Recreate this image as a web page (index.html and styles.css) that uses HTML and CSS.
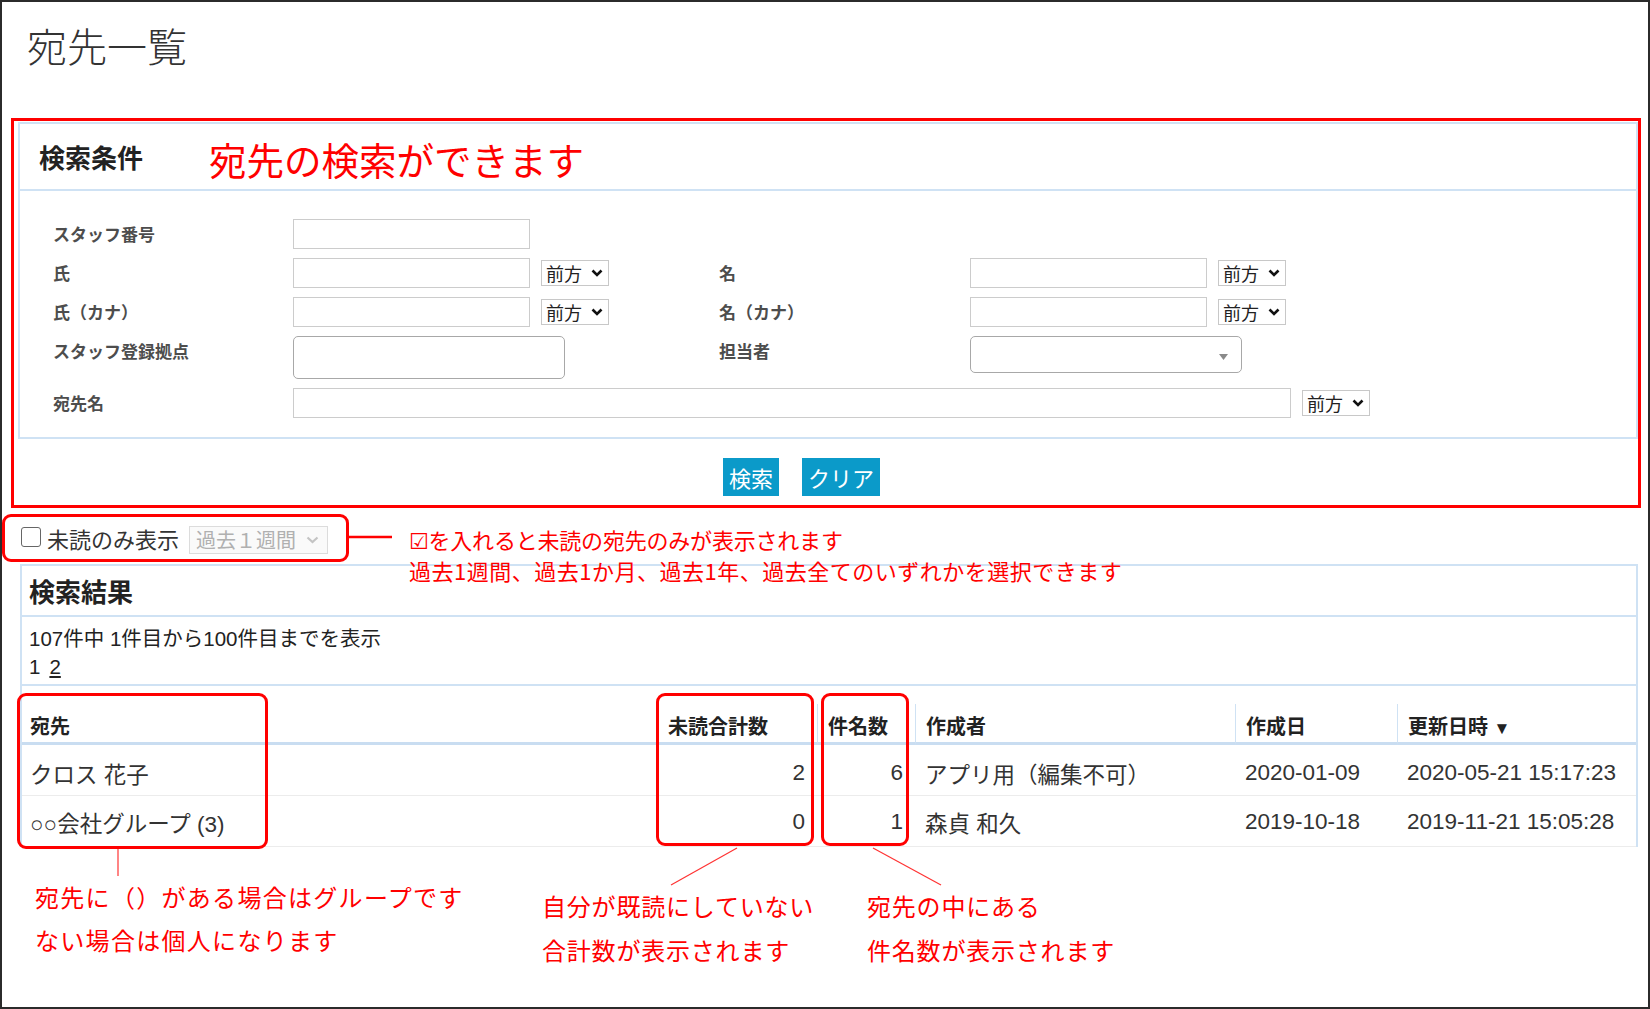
FILE: index.html
```html
<!DOCTYPE html>
<html lang="ja">
<head>
<meta charset="utf-8">
<title>宛先一覧</title>
<link rel="stylesheet" href="styles.css">
</head>
<body>
<div class="frame">
  <h1 class="page-title">宛先一覧</h1>

  <div class="search-callout">
    <section class="panel">
      <header class="panel-head">
        <h2 class="panel-title">検索条件</h2>
        <p class="note-lg">宛先の検索ができます</p>
      </header>
      <div class="panel-body">
        <div class="form-grid">
          <label class="f-label">スタッフ番号</label>
          <input class="f-input" type="text">
          <span class="blank-row"></span>

          <label class="f-label">氏</label>
          <input class="f-input" type="text">
          <div class="sel"><span>前方</span><svg width="12" height="8" viewBox="0 0 12 8"><path d="M1.5 1.5 L6 6 L10.5 1.5" fill="none" stroke="#111" stroke-width="2.6"/></svg></div>
          <label class="f-label">名</label>
          <input class="f-input" type="text">
          <div class="sel"><span>前方</span><svg width="12" height="8" viewBox="0 0 12 8"><path d="M1.5 1.5 L6 6 L10.5 1.5" fill="none" stroke="#111" stroke-width="2.6"/></svg></div>

          <label class="f-label">氏（カナ）</label>
          <input class="f-input" type="text">
          <div class="sel"><span>前方</span><svg width="12" height="8" viewBox="0 0 12 8"><path d="M1.5 1.5 L6 6 L10.5 1.5" fill="none" stroke="#111" stroke-width="2.6"/></svg></div>
          <label class="f-label">名（カナ）</label>
          <input class="f-input" type="text">
          <div class="sel"><span>前方</span><svg width="12" height="8" viewBox="0 0 12 8"><path d="M1.5 1.5 L6 6 L10.5 1.5" fill="none" stroke="#111" stroke-width="2.6"/></svg></div>

          <label class="f-label">スタッフ登録拠点</label>
          <input class="f-input round" type="text">
          <label class="f-label">担当者</label>
          <div class="combo"><svg width="9" height="6" viewBox="0 0 9 6"><polygon points="0,0 9,0 4.5,6" fill="#8a8a8a"/></svg></div>

          <label class="f-label">宛先名</label>
          <div class="wide">
            <input class="f-input long" type="text">
            <div class="sel"><span>前方</span><svg width="12" height="8" viewBox="0 0 12 8"><path d="M1.5 1.5 L6 6 L10.5 1.5" fill="none" stroke="#111" stroke-width="2.6"/></svg></div>
          </div>
        </div>
      </div>
    </section>
    <div class="actions">
      <button class="btn" type="button">検索</button>
      <button class="btn" type="button">クリア</button>
    </div>
  </div>

  <div class="filter-row">
    <div class="filter-box">
      <input class="check" type="checkbox">
      <span class="check-text">未読のみ表示</span>
      <div class="period-sel"><span>過去１週間</span><svg width="13" height="8" viewBox="0 0 13 8"><path d="M1.5 1.5 L6.5 6 L11.5 1.5" fill="none" stroke="#c4c4c4" stroke-width="2.2"/></svg></div>
    </div>
    <p class="filter-note"><span>☑を入れると未読の宛先のみが表示されます</span><br><span class="wide-line">過去1週間、過去1か月、過去1年、過去全てのいずれかを選択できます</span></p>
  </div>

  <section class="results">
    <header class="results-head">
      <h2 class="panel-title">検索結果</h2>
    </header>
    <div class="results-info">
      <div>107件中 1件目から100件目までを表示</div>
      <div class="pager"><span>1</span><a href="#">2</a></div>
    </div>
    <table class="list">
      <colgroup>
        <col class="c-dest">
        <col class="c-unread">
        <col class="c-count">
        <col class="c-author">
        <col class="c-created">
        <col class="c-updated">
      </colgroup>
      <thead>
        <tr class="head">
          <th>宛先</th>
          <th>未読合計数</th>
          <th>件名数</th>
          <th>作成者</th>
          <th>作成日</th>
          <th>更新日時 <span class="sort">▼</span></th>
        </tr>
      </thead>
      <tbody>
        <tr class="row">
          <td>クロス 花子</td>
          <td class="num">2</td>
          <td class="num">6</td>
          <td>アプリ用（編集不可）</td>
          <td>2020-01-09</td>
          <td>2020-05-21 15:17:23</td>
        </tr>
        <tr class="row">
          <td>○○会社グループ (3)</td>
          <td class="num">0</td>
          <td class="num">1</td>
          <td>森貞 和久</td>
          <td>2019-10-18</td>
          <td>2019-11-21 15:05:28</td>
        </tr>
      </tbody>
    </table>
  </section>

  <div class="notes">
    <p class="note note-group">宛先に（）がある場合はグループです<br>ない場合は個人になります</p>
    <p class="note note-unread">自分が既読にしていない<br>合計数が表示されます</p>
    <p class="note note-count">宛先の中にある<br>件名数が表示されます</p>
  </div>

  <!-- callout marks drawn over the list -->
  <div class="marks">
    <div class="mark-box mb-dest"></div>
    <div class="mark-box mb-unread"></div>
    <div class="mark-box mb-count"></div>
    <svg class="mark-lines" width="1646" height="1005" viewBox="0 0 1646 1005">
      <line x1="347" y1="535" x2="390" y2="535" stroke="#ff0000" stroke-width="2.5"/>
      <line x1="116" y1="847" x2="116" y2="874" stroke="#ff3333" stroke-width="1.2"/>
      <line x1="735" y1="846" x2="669" y2="883" stroke="#ff3333" stroke-width="1.2"/>
      <line x1="871" y1="846" x2="939" y2="883" stroke="#ff3333" stroke-width="1.2"/>
    </svg>
  </div>
</div>
</body>
</html>
```

FILE: styles.css
```css
* { box-sizing: border-box; }

html, body {
  margin: 0;
  padding: 0;
  background: #fff;
}

body {
  font-family: "Liberation Sans", "Noto Sans CJK JP", sans-serif;
  color: #333;
}

.frame {
  position: relative;
  width: 1650px;
  height: 1009px;
  border: 2px solid #2b2b2b;
  overflow: hidden;
}

.page-title {
  margin: 20px 0 50px 25px;
  font-family: "Noto Sans CJK JP", sans-serif;
  font-size: 40px;
  line-height: 46px;
  font-weight: 300;
  color: #333;
}

/* search conditions */
.search-callout {
  margin: 0 7px 0 9px;
  border: 3px solid #ff0000;
  padding: 1px 0 0 4px;
}

.panel {
  border: 2px solid #cfe2f4;
}

.panel-head {
  height: 67px;
  display: flex;
  align-items: center;
  padding-left: 19px;
  border-bottom: 2px solid #cfe2f4;
}

.panel-title {
  margin: 0;
  font-family: "Noto Sans CJK JP", sans-serif;
  font-size: 26px;
  font-weight: 700;
  color: #222;
  line-height: 1;
}

.note-lg {
  margin: 0 0 0 66px;
  padding-top: 5px;
  font-family: "Noto Sans CJK JP", sans-serif;
  font-size: 37.5px;
  line-height: 1;
  color: #ff0000;
}

.panel-body {
  padding: 28px 0 19px 33px;
}

.form-grid {
  display: grid;
  grid-template-columns: 240px 248px 178px 251px 248px 68px;
  row-gap: 9px;
  align-items: start;
}

.blank-row {
  grid-column: 3 / -1;
}

.f-label {
  font-family: "Noto Sans CJK JP", sans-serif;
  font-size: 17px;
  line-height: 30px;
  font-weight: 700;
  color: #4d4d4d;
}

.f-input {
  display: block;
  flex: none;
  width: 237px;
  height: 30px;
  margin: 0;
  padding: 0 4px;
  border: 1px solid #cccccc;
  background: #fff;
  font-size: 16px;
  outline: none;
}

.f-input.round {
  grid-column: 2 / 4;
  width: 272px;
  height: 43px;
  border-color: #a8a8a8;
  border-radius: 5px;
}

.f-input.long {
  width: 998px;
}

.combo {
  grid-column: 5 / 7;
  width: 272px;
  height: 37px;
  border: 1px solid #a8a8a8;
  border-radius: 5px;
  display: flex;
  align-items: center;
  justify-content: flex-end;
  padding: 4px 13px 0 0;
}

.sel {
  flex: none;
  align-self: center;
  width: 68px;
  height: 26px;
  border: 1px solid #c8c8c8;
  background: #fff;
  display: flex;
  align-items: center;
  justify-content: space-between;
  padding: 0 5px 0 4px;
  font-family: "Noto Sans CJK JP", sans-serif;
  font-size: 18px;
  line-height: 1;
  color: #222;
}

.wide {
  grid-column: 2 / -1;
  display: flex;
  align-items: center;
  gap: 11px;
}

.actions {
  display: flex;
  justify-content: center;
  gap: 23px;
  padding: 19px 53px 9px 0;
}

.btn {
  height: 38px;
  margin: 0;
  padding: 0 6px;
  border: 0;
  background: #0b9ac9;
  color: #fff;
  font-family: "Noto Sans CJK JP", sans-serif;
  font-size: 22px;
  line-height: 38px;
}

/* unread filter */
.filter-row {
  position: relative;
  margin-top: 6px;
  height: 48px;
}

.filter-box {
  display: inline-flex;
  align-items: center;
  width: 347px;
  height: 48px;
  border: 3px solid #ff0000;
  border-radius: 9px;
  padding: 0 0 0 16px;
}

.check {
  appearance: none;
  -webkit-appearance: none;
  width: 20px;
  height: 20px;
  margin: -2px 6px 0 0;
  border: 1.5px solid #666;
  border-radius: 3px;
  background: #fff;
}

.check-text {
  font-family: "Noto Sans CJK JP", sans-serif;
  font-size: 22px;
  line-height: 1;
  color: #333;
}

.period-sel {
  width: 139px;
  height: 28px;
  margin: 3px 0 0 10px;
  border: 1px solid #dcdcdc;
  background: #fafafa;
  display: flex;
  align-items: center;
  justify-content: space-between;
  padding: 0 8px 0 6px;
  font-family: "Noto Sans CJK JP", sans-serif;
  font-size: 20px;
  line-height: 1;
  color: #b0b0b0;
}

.filter-note {
  position: absolute;
  left: 407px;
  top: 10px;
  margin: 0;
  font-family: "Noto Sans CJK JP", "DejaVu Sans", sans-serif;
  font-size: 22px;
  line-height: 31px;
  letter-spacing: -0.2px;
  color: #ff0000;
  white-space: nowrap;
}

.filter-note .wide-line {
  letter-spacing: 0.5px;
}

/* results */
.results {
  margin: 2px 10px 0 18px;
  border: 2px solid #cfe2f4;
  border-bottom: 0;
}

.results-head {
  height: 51px;
  display: flex;
  align-items: center;
  padding-left: 7px;
  border-bottom: 2px solid #cfe2f4;
}

.results-info {
  padding: 8px 0 3px 7px;
  border-bottom: 2px solid #cfe2f4;
  font-size: 20.5px;
  line-height: 28px;
  color: #222;
}

.pager a {
  margin-left: 9px;
  color: inherit;
  text-decoration: underline;
}

.list {
  margin-top: 18px;
  width: 100%;
  border-collapse: separate;
  border-spacing: 0;
  table-layout: fixed;
}

.c-dest { width: 635px; }
.c-unread { width: 160px; }
.c-count { width: 98px; }
.c-author { width: 320px; }
.c-created { width: 162px; }
.c-updated { width: 239px; }

.list tr.head { height: 41px; }
.list tr.row { height: 51px; }

.list th {
  padding: 5px 10px 0;
  border-bottom: 3px solid #c9ddf1;
  text-align: left;
  font-size: 20px;
  font-weight: 700;
  color: #222;
  white-space: nowrap;
}

.list th + th {
  border-left: 1px solid #cfe2f4;
}

.list th:first-child,
.list td:first-child {
  padding-left: 8px;
}

.sort {
  font-size: 17px;
}

.list td {
  padding: 2px 10px 0;
  border-bottom: 1px solid #ececec;
  font-size: 22.5px;
  color: #333;
  white-space: nowrap;
}

.list tr.row:first-child td {
  padding-top: 6px;
}

.list td.num {
  text-align: right;
  padding-right: 12px;
}

/* annotations below the list */
.notes {
  display: flex;
  align-items: flex-start;
  margin-top: 28px;
}

.note {
  margin: 0;
  font-family: "Noto Sans CJK JP", sans-serif;
  font-size: 24px;
  letter-spacing: 0.8px;
  color: #ff0000;
  white-space: nowrap;
}

.note-group {
  margin-left: 33px;
  width: 507px;
  line-height: 43px;
  letter-spacing: 1.3px;
}

.note-unread {
  margin-top: 9px;
  width: 325px;
  line-height: 44px;
}

.note-count {
  margin-top: 9px;
  line-height: 44px;
}

/* callout marks */
.marks {
  position: absolute;
  left: 0;
  top: 0;
  width: 1646px;
  height: 1005px;
  pointer-events: none;
}

.mark-box {
  position: absolute;
  border: 3px solid #ff0000;
  border-radius: 9px;
}

.mb-dest { left: 15px; top: 691px; width: 251px; height: 156px; }
.mb-unread { left: 654px; top: 691px; width: 158px; height: 153px; }
.mb-count { left: 819px; top: 691px; width: 88px; height: 153px; }

.mark-lines {
  position: absolute;
  left: 0;
  top: 0;
}
```
